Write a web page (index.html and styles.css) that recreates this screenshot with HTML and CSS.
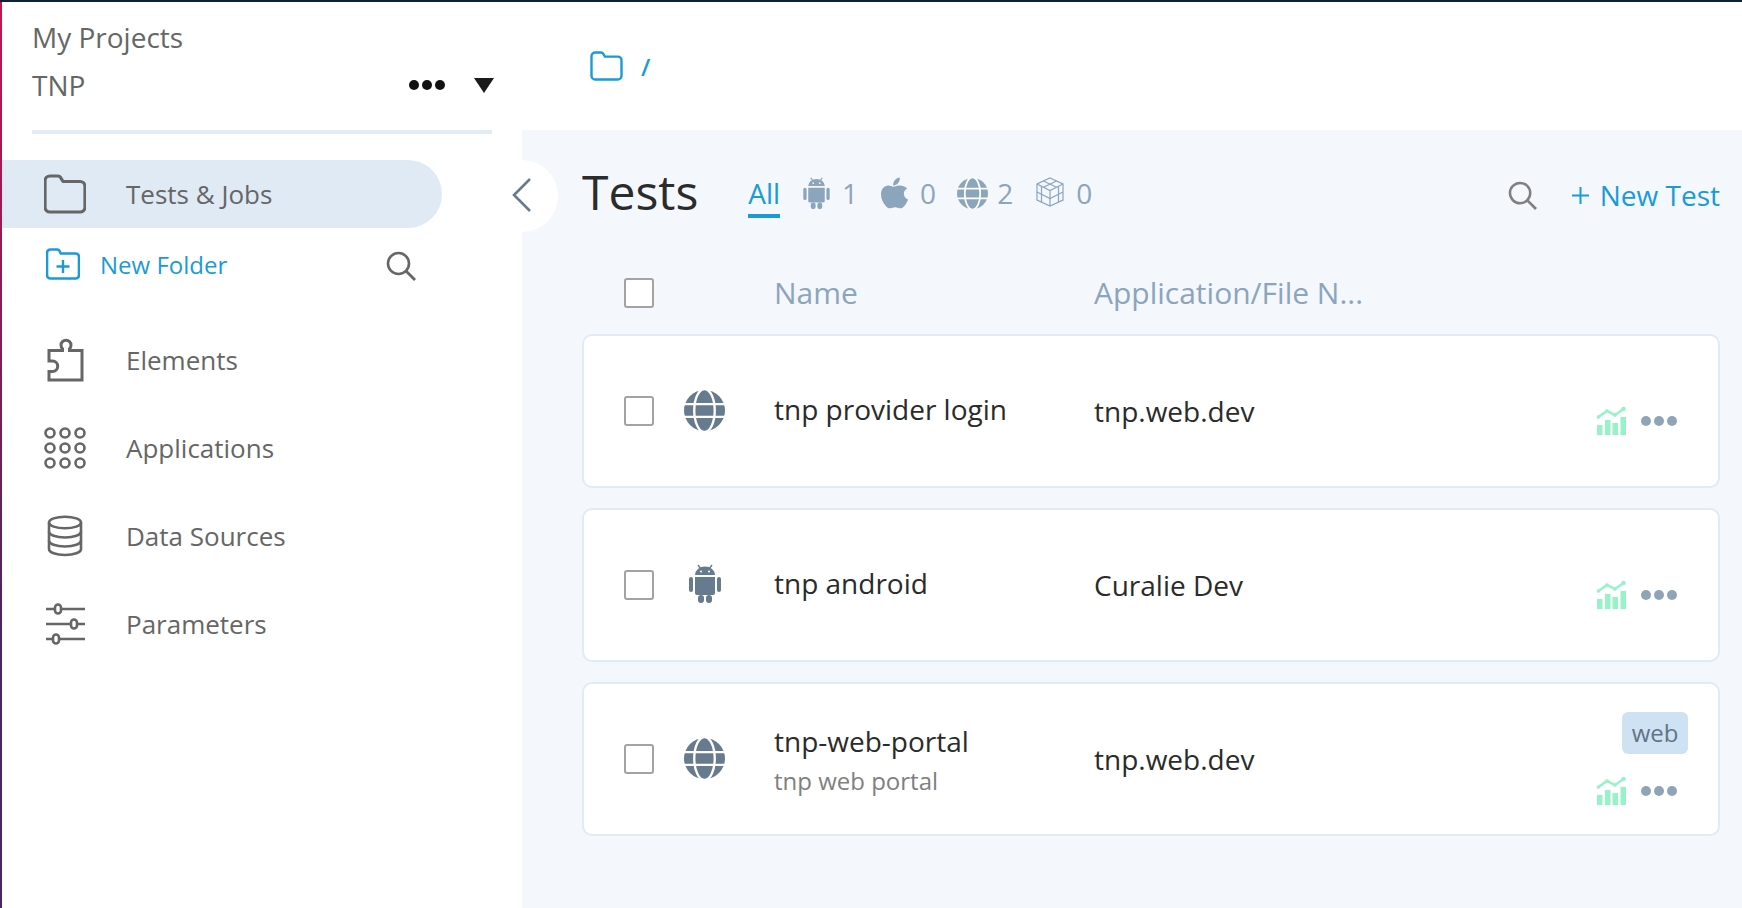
FILE: index.html
```html
<!DOCTYPE html>
<html lang="en">
<head>
    <meta charset="UTF-8">
    <title>Tests</title>
    <link rel="stylesheet" href="styles.css">
</head>
<body>
    <svg class="sprite" width="0" height="0">
        <symbol id="globe" viewBox="0 0 42 42">
            <circle cx="21" cy="21" r="21" fill="currentColor"/>
            <g fill="none" stroke="#fff" stroke-width="2.400">
                <path d="M0 14.500H42M0 27.500H42"/>
                <ellipse cx="21" cy="21" rx="10.500" ry="22"/>
            </g>
        </symbol>
        <symbol id="android" viewBox="0 0 32 40">
            <g fill="currentColor">
                <path d="M6 11a10 8.500 0 0 1 20 0z"/>
                <path d="M9 1l3 4M23 1l-3 4" stroke="currentColor" stroke-width="1.400"/>
                <path d="M6 13h20v16a2 2 0 0 1-2 2H8a2 2 0 0 1-2-2z"/>
                <rect x="0" y="13" width="4" height="15" rx="2"/>
                <rect x="28" y="13" width="4" height="15" rx="2"/>
                <rect x="9" y="31" width="6" height="8" rx="3"/>
                <rect x="17" y="31" width="6" height="8" rx="3"/>
            </g>
            <circle cx="12" cy="7.500" r="1" fill="#fff"/>
            <circle cx="20" cy="7.500" r="1" fill="#fff"/>
        </symbol>
        <symbol id="trend" viewBox="0 0 29 28">
            <g fill="currentColor">
                <rect x="0" y="18" width="5.500" height="10"/>
                <rect x="8" y="13" width="5.500" height="15"/>
                <rect x="15.500" y="16" width="5.500" height="12"/>
                <rect x="23.500" y="10" width="5.500" height="18"/>
                <circle cx="1.500" cy="10" r="1.800"/>
                <circle cx="10" cy="4" r="1.800"/>
                <circle cx="18" cy="8" r="1.800"/>
                <circle cx="26.500" cy="2" r="2.200"/>
            </g>
            <path d="M1.500 10L10 4L18 8L26.500 2" fill="none" stroke="currentColor" stroke-width="2.400"/>
        </symbol>
        <symbol id="search" viewBox="0 0 30 30">
            <circle cx="12.500" cy="12.500" r="10.500" fill="none" stroke="currentColor" stroke-width="2.600"/>
            <path d="M20 20L29 29" stroke="currentColor" stroke-width="2.800"/>
        </symbol>
        <symbol id="folder" viewBox="0 0 42 40">
            <path d="M6 2h8a3 3 0 0 1 2.500 1.400L19 7.500h17a5 5 0 0 1 5 5V33a5 5 0 0 1-5 5H6a5 5 0 0 1-5-5V7a5 5 0 0 1 5-5z" fill="none" stroke="currentColor" stroke-width="3.200" stroke-linejoin="round"/>
        </symbol>
    </svg>

    <!-- Sidebar -->
    <aside class="sidebar">
        <div class="project">
            <div class="project-label">My Projects</div>
            <div class="project-row">
                <span class="project-name">TNP</span>
                <span class="dots dots-dark"><i></i><i></i><i></i></span>
                <span class="caret"></span>
            </div>
        </div>

        <a class="nav-item active">
            <svg class="nav-icon" width="42" height="40"><use href="#folder"/></svg>
            <span>Tests &amp; Jobs</span>
        </a>

        <div class="folder-row">
            <svg width="34" height="32" viewBox="0 0 34 32" class="new-folder-icon">
                <path d="M4.500 1.500h7a2 2 0 0 1 1.700 1l1.600 3h14.700a3.500 3.500 0 0 1 3.500 3.500V27a3.500 3.500 0 0 1-3.500 3.500h-25A3.500 3.500 0 0 1 1 27V5a3.500 3.500 0 0 1 3.500-3.500z" fill="none" stroke="currentColor" stroke-width="2.600"/>
                <path d="M17 12v13M10.500 18.500h13" stroke="currentColor" stroke-width="2.400"/>
            </svg>
            <span class="new-folder">New Folder</span>
            <svg class="search-icon" width="30" height="30"><use href="#search"/></svg>
        </div>

        <nav class="nav-list">
            <a class="nav-item">
                <svg class="nav-icon" width="42" height="44" viewBox="0 0 42 44">
                    <path d="M5 12.500h13.500v-1.800a5 5 0 1 1 7 0v1.800H38V42H5V33.500h3.500a5.200 5.200 0 0 0 0-10.400H5z" fill="none" stroke="currentColor" stroke-width="3"/>
                </svg>
                <span>Elements</span>
            </a>
            <a class="nav-item">
                <svg class="nav-icon" width="42" height="42" viewBox="0 0 42 42">
                    <g fill="none" stroke="currentColor" stroke-width="2.600">
                        <circle cx="6" cy="6" r="4.500"/><circle cx="21" cy="6" r="4.500"/><circle cx="36" cy="6" r="4.500"/>
                        <circle cx="6" cy="21" r="4.500"/><circle cx="21" cy="21" r="4.500"/><circle cx="36" cy="21" r="4.500"/>
                        <circle cx="6" cy="36" r="4.500"/><circle cx="21" cy="36" r="4.500"/><circle cx="36" cy="36" r="4.500"/>
                    </g>
                </svg>
                <span>Applications</span>
            </a>
            <a class="nav-item">
                <svg class="nav-icon" width="42" height="42" viewBox="0 0 42 42">
                    <g fill="none" stroke="currentColor" stroke-width="2.600">
                        <ellipse cx="21" cy="7.500" rx="16" ry="5.800"/>
                        <path d="M5 7.500V34c0 3.500 7 6 16 6s16-2.500 16-6V7.500"/>
                        <path d="M5 16.500c0 3.500 7 6 16 6s16-2.500 16-6M5 25.500c0 3.500 7 6 16 6s16-2.500 16-6"/>
                    </g>
                </svg>
                <span>Data Sources</span>
            </a>
            <a class="nav-item">
                <svg class="nav-icon" width="42" height="42" viewBox="0 0 42 42">
                    <g fill="#fff" stroke="currentColor" stroke-width="2.600">
                        <path d="M2 6H41M2 21H41M2 36H41" fill="none"/>
                        <rect x="11" y="1.500" width="6" height="9" rx="3"/>
                        <rect x="27" y="16.500" width="6" height="9" rx="3"/>
                        <rect x="9" y="31.500" width="6" height="9" rx="3"/>
                    </g>
                </svg>
                <span>Parameters</span>
            </a>
        </nav>
    </aside>

    <main class="main">
        <header class="breadcrumb">
            <svg class="crumb-folder" width="33" height="30"><use href="#folder"/></svg>
            <span class="crumb-slash">/</span>
        </header>

        <section class="content">
            <button class="collapse">
                <svg width="20" height="34" viewBox="0 0 20 34"><path d="M18 1L2 17L18 33" fill="none" stroke="currentColor" stroke-width="2.600"/></svg>
            </button>

            <div class="toolbar">
                <h1>Tests</h1>
                <div class="tabs">
                    <span class="tab tab-active">All</span>
                    <span class="tab">
                        <svg width="27" height="33"><use href="#android"/></svg>1
                    </span>
                    <span class="tab">
                        <svg width="27" height="32" viewBox="0 0 28 32"><path fill="currentColor" d="M19.500 0c.3 2.400-.7 4.400-1.900 5.800-1.300 1.500-3.100 2.500-5 2.300-.3-2 .8-4.300 1.900-5.600C15.800 1 17.800.1 19.500 0zM27.200 11c-2.500 1.600-3.500 3.500-3.500 5.800 0 2.800 1.600 4.700 4.300 5.900-.9 2.700-2.400 5.200-4.200 7.300-1.300 1.500-2.700 2-4.300 1.900-1.700-.1-2.700-1.100-4.900-1.100s-3.300 1-4.900 1.100c-1.700.1-3.100-.6-4.500-2.200C1.600 26.100 0 21.500 0 17.400 0 12 3.300 8.300 7.500 8.200c1.900 0 3.800 1.200 5.300 1.200 1.400 0 3.600-1.400 6-1.300 3.500.1 6.300 1.100 8.400 2.900z"/></svg>0
                    </span>
                    <span class="tab">
                        <svg class="tab-globe" width="31" height="31"><use href="#globe"/></svg>2
                    </span>
                    <span class="tab">
                        <svg class="tab-cube" width="28" height="30" viewBox="0 0 28 30"><g fill="none" stroke="currentColor" stroke-width="1.200"><path d="M14 1L27 7V23L14 29L1 23V7z"/><path d="M1 7L14 13.500L27 7M14 13.500V29"/><path d="M7.500 4L20.500 10.300M20.500 4L7.500 10.300M1 15L14 21.500L27 15M5.500 9.300V25M22.500 9.300V25"/></g></svg>0
                    </span>
                </div>
                <svg class="toolbar-search" width="29" height="29"><use href="#search"/></svg>
                <a class="new-test">
                    <svg width="17" height="17" viewBox="0 0 17 17"><path d="M8.500 0V17M0 8.500H17" stroke="currentColor" stroke-width="2"/></svg>
                    New Test
                </a>
            </div>

            <div class="row row-head">
                <span class="checkbox"></span>
                <span></span>
                <span class="head-label">Name</span>
                <span class="head-label">Application/File N...</span>
            </div>

            <div class="card">
                <span class="checkbox"></span>
                <svg class="type-icon" width="41" height="41"><use href="#globe"/></svg>
                <div class="name">tnp provider login</div>
                <div class="app">tnp.web.dev</div>
                <div class="actions">
                    <div class="action-row">
                        <svg class="trend" width="29" height="28"><use href="#trend"/></svg>
                        <span class="dots"><i></i><i></i><i></i></span>
                    </div>
                </div>
            </div>

            <div class="card">
                <span class="checkbox"></span>
                <svg class="type-icon" width="32" height="40"><use href="#android"/></svg>
                <div class="name">tnp android</div>
                <div class="app">Curalie Dev</div>
                <div class="actions">
                    <div class="action-row">
                        <svg class="trend" width="29" height="28"><use href="#trend"/></svg>
                        <span class="dots"><i></i><i></i><i></i></span>
                    </div>
                </div>
            </div>

            <div class="card">
                <span class="checkbox"></span>
                <svg class="type-icon" width="41" height="41"><use href="#globe"/></svg>
                <div class="name">tnp-web-portal<small>tnp web portal</small></div>
                <div class="app">tnp.web.dev</div>
                <div class="actions">
                    <span class="tag">web</span>
                    <div class="action-row">
                        <svg class="trend" width="29" height="28"><use href="#trend"/></svg>
                        <span class="dots"><i></i><i></i><i></i></span>
                    </div>
                </div>
            </div>
        </section>
    </main>
</body>
</html>
```

FILE: styles.css
```css
* {
    margin: 0;
    padding: 0;
    box-sizing: border-box;
    font-family: "Open Sans", sans-serif;
}
html, body {
    height: 100%;
}
body {
    display: flex;
    overflow: hidden;
    background: #fff;
    border-top: 2px solid #0d2238;
    color: #666;
}
.sprite {
    position: absolute;
}

/* Sidebar */
.sidebar {
    width: 522px;
    flex: none;
    position: relative;
    padding-left: 2px;
    background: #fff;
}
.sidebar::before {
    content: "";
    position: absolute;
    left: 0;
    top: 0;
    bottom: 0;
    width: 2px;
    background: linear-gradient(#c9134b, #4a2460 70%, #4a2460);
}
.project {
    margin: 0 30px 26px 30px;
    height: 132px;
    padding-top: 15px;
    border-bottom: 4px solid #e1ebf5;
    width: 460px;
}
.project-label {
    font-size: 28px;
    line-height: 40px;
}
.project-row {
    display: flex;
    align-items: center;
    margin-top: 8px;
    font-size: 28px;
    line-height: 40px;
}
.project-name {
    flex: 1;
}
.dots {
    display: inline-flex;
    gap: 3px;
}
.dots i {
    width: 10px;
    height: 10px;
    border-radius: 50%;
    background: #90a4b7;
}
.dots-dark {
    margin-right: 29px;
}
.dots-dark i {
    background: #111;
}
.caret {
    width: 0;
    height: 0;
    margin-right: -2px;
    border-left: 10px solid transparent;
    border-right: 10px solid transparent;
    border-top: 15px solid #1a1a1a;
}
.nav-item {
    display: flex;
    align-items: center;
    height: 68px;
    padding-left: 42px;
    font-size: 26px;
    color: #666;
}
.nav-item span {
    margin-left: 40px;
}
.nav-icon {
    width: 42px;
    flex: none;
}
.nav-item.active {
    width: 440px;
    background: #e0eaf5;
    border-radius: 0 34px 34px 0;
}
.folder-row {
    display: flex;
    align-items: center;
    width: 414px;
    height: 66px;
    padding: 6px 0 0 44px;
    color: #1a9bd7;
}
.new-folder {
    flex: 1;
    margin-left: 20px;
    font-size: 24px;
}
.search-icon {
    color: #666;
    margin-top: 4px;
}
.nav-list {
    margin-top: 22px;
}
.nav-list .nav-item {
    height: 88px;
}

/* Main */
.main {
    flex: 1;
    display: flex;
    flex-direction: column;
}
.breadcrumb {
    display: flex;
    align-items: center;
    height: 128px;
    padding-left: 68px;
    color: #1a9bd7;
}
.crumb-slash {
    margin-left: 18px;
    font-size: 24px;
    font-weight: 600;
}
.content {
    flex: 1;
    position: relative;
    padding: 0 22px 0 60px;
    background: #f4f7fc;
}
.collapse {
    position: absolute;
    left: -36px;
    top: 30px;
    width: 72px;
    height: 72px;
    border: none;
    border-radius: 50%;
    background: #fff;
    color: #667c8e;
}
.collapse svg {
    display: block;
    margin: -2px 0 0 26px;
}
.toolbar {
    display: flex;
    align-items: center;
    height: 122px;
    padding-top: 10px;
}
h1 {
    margin-bottom: 9px;
    font-size: 48px;
    font-weight: 400;
    color: #2b2b2b;
}
.tabs {
    flex: 1;
    display: flex;
    align-items: center;
    gap: 23px;
    margin: 0 0 6px 50px;
    font-size: 28px;
    color: #8ba5bd;
}
.tab {
    display: inline-flex;
    align-items: center;
    gap: 12px;
}
.tab-active {
    color: #1a9bd7;
    padding-bottom: 2px;
    margin-bottom: -6px;
    border-bottom: 4px solid #1a9bd7;
}
.tab-globe {
    margin: 0 -3px 0 -2px;
}
.tab-cube {
    margin-top: -2px;
}
.toolbar-search {
    color: #808080;
    margin: 0 35px 2px 0;
}
.new-test {
    display: flex;
    align-items: center;
    gap: 11px;
    margin-bottom: 2px;
    font-size: 28px;
    color: #1a9bd7;
}

/* Rows */
.row,
.card {
    display: grid;
    grid-template-columns: 30px 120px 320px 1fr auto;
    align-items: center;
    padding: 0 41px 0 42px;
}
.row-head {
    height: 82px;
    font-size: 30px;
    color: #8ba5bd;
}
.head-label {
    margin-bottom: 2px;
}
.checkbox {
    width: 30px;
    height: 30px;
    background: #fff;
    border: 2px solid #a3a3a3;
    border-radius: 3px;
}
.card {
    height: 154px;
    margin-bottom: 20px;
    background: #fff;
    border: 2px solid #e1ebf5;
    border-radius: 10px;
    padding-left: 40px;
}
.type-icon {
    justify-self: center;
    margin: -2px 0 0 -19px;
    color: #667c8e;
}
.name,
.app {
    font-size: 28px;
    color: #2b2b2b;
}
.name {
    padding-bottom: 4px;
}
.name small {
    display: block;
    margin: 4px 0 -4px;
    font-size: 24px;
    color: #808080;
}
.actions {
    display: flex;
    flex-direction: column;
    align-items: flex-end;
}
.action-row {
    display: flex;
    align-items: center;
    gap: 15px;
    margin: 22px 0 2px;
}
.trend {
    color: #97f2c8;
}
.tag {
    margin: 0 -11px 1px 0;
    padding: 0 9.5px;
    height: 42px;
    line-height: 42px;
    background: #cfe2f3;
    border-radius: 6px;
    font-size: 24px;
    color: #5f7485;
}
```
